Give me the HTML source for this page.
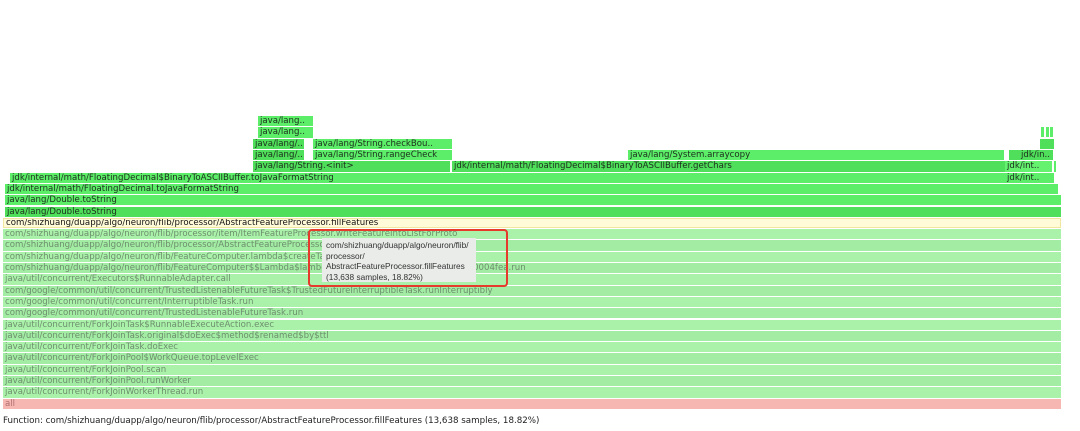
<!DOCTYPE html>
<html><head><meta charset="utf-8"><style>
html,body{margin:0;padding:0;background:#fff;width:1080px;height:431px;overflow:hidden;font-family:"Liberation Sans","DejaVu Sans",sans-serif}
.f{position:absolute;height:10.3px;font-family:"DejaVu Sans",sans-serif;font-size:8.6px;line-height:10.8px;white-space:nowrap;overflow:hidden;padding-left:2px;box-sizing:border-box;color:#1d2d1d}
.b{background:#5cee68}
.c{background:#4fdf5a}
.d{background:#64f26f}
.p{background:#aaf2aa;color:#6e8e6e}
.q{background:#a2eca3;color:#6e8e6e}
</style></head><body>
<div class="f b" style="left:258px;top:116px;width:55px">java/lang..</div>
<div class="f b" style="left:258px;top:127.3px;width:55px">java/lang..</div>
<div class="f c" style="left:253px;top:138.6px;width:51px">java/lang/..</div>
<div class="f b" style="left:313px;top:138.6px;width:139px">java/lang/String.checkBou..</div>
<div class="f c" style="left:253px;top:150px;width:51px">java/lang/..</div>
<div class="f b" style="left:313px;top:150px;width:139px">java/lang/String.rangeCheck</div>
<div class="f b" style="left:628px;top:150px;width:376px">java/lang/System.arraycopy</div>
<div class="f c" style="left:1009px;top:150px;width:44px;text-align:right;padding-right:3px">jdk/in..</div>
<div class="f b" style="left:1041px;top:127px;width:3px"></div>
<div class="f b" style="left:1046px;top:127px;width:3px"></div>
<div class="f b" style="left:1050px;top:127px;width:3px"></div>
<div class="f c" style="left:1040px;top:138.6px;width:14px"></div>
<div class="f c" style="left:253px;top:161.3px;width:197px">java/lang/String.&lt;init&gt;</div>
<div class="f c" style="left:452px;top:161.3px;width:553px">jdk/internal/math/FloatingDecimal$BinaryToASCIIBuffer.getChars</div>
<div class="f d" style="left:1005px;top:161.3px;width:47px">jdk/int..</div>
<div class="f b" style="left:1054px;top:161.3px;width:2px"></div>
<div class="f b" style="left:10px;top:172.6px;width:995px">jdk/internal/math/FloatingDecimal$BinaryToASCIIBuffer.toJavaFormatString</div>
<div class="f b" style="left:1005px;top:172.6px;width:49px">jdk/int..</div>
<div class="f b" style="left:5px;top:184px;width:1053px">jdk/internal/math/FloatingDecimal.toJavaFormatString</div>
<div class="f b" style="left:5px;top:195.2px;width:1056px">java/lang/Double.toString</div>
<div class="f c" style="left:5px;top:206.5px;width:1056px">java/lang/Double.toString</div>
<div class="f" style="left:3px;top:217.8px;width:1058px;background:#fffbd9;border:1px solid #f0e6a0;line-height:9px;color:#111">com/shizhuang/duapp/algo/neuron/flib/processor/AbstractFeatureProcessor.fillFeatures</div>
<div class="f p" style="left:3px;top:229.1px;width:1058px">com/shizhuang/duapp/algo/neuron/flib/processor/item/ItemFeatureProcessor.writeFeatureIntoListForProto</div>
<div class="f q" style="left:3px;top:240.4px;width:1058px">com/shizhuang/duapp/algo/neuron/flib/processor/AbstractFeatureProcessor.fillFeatures</div>
<div class="f p" style="left:3px;top:251.7px;width:1058px">com/shizhuang/duapp/algo/neuron/flib/FeatureComputer.lambda$createTask</div>
<div class="f q" style="left:3px;top:263px;width:1058px">com/shizhuang/duapp/algo/neuron/flib/FeatureComputer$$Lambda$lambda$createTask$1074.0x0000000000004fea.run</div>
<div class="f p" style="left:3px;top:274.3px;width:1058px">java/util/concurrent/Executors$RunnableAdapter.call</div>
<div class="f q" style="left:3px;top:285.6px;width:1058px">com/google/common/util/concurrent/TrustedListenableFutureTask$TrustedFutureInterruptibleTask.runInterruptibly</div>
<div class="f p" style="left:3px;top:296.9px;width:1058px">com/google/common/util/concurrent/InterruptibleTask.run</div>
<div class="f q" style="left:3px;top:308.2px;width:1058px">com/google/common/util/concurrent/TrustedListenableFutureTask.run</div>
<div class="f p" style="left:3px;top:319.5px;width:1058px">java/util/concurrent/ForkJoinTask$RunnableExecuteAction.exec</div>
<div class="f q" style="left:3px;top:330.8px;width:1058px">java/util/concurrent/ForkJoinTask.original$doExec$method$renamed$by$ttl</div>
<div class="f p" style="left:3px;top:342.1px;width:1058px">java/util/concurrent/ForkJoinTask.doExec</div>
<div class="f q" style="left:3px;top:353.4px;width:1058px">java/util/concurrent/ForkJoinPool$WorkQueue.topLevelExec</div>
<div class="f p" style="left:3px;top:364.7px;width:1058px">java/util/concurrent/ForkJoinPool.scan</div>
<div class="f q" style="left:3px;top:376px;width:1058px">java/util/concurrent/ForkJoinPool.runWorker</div>
<div class="f p" style="left:3px;top:387.3px;width:1058px">java/util/concurrent/ForkJoinWorkerThread.run</div>
<div class="f" style="left:3px;top:398.6px;width:1058px;background:#f6b6b2;color:#b07070">all</div>
<div style="position:absolute;left:322px;top:238px;width:154px;height:44px;background:#e9ece9;font-size:8.3px;line-height:10.5px;color:#333;padding:2px 4px;box-sizing:border-box">com/shizhuang/duapp/algo/neuron/flib/<br>processor/<br>AbstractFeatureProcessor.fillFeatures<br>(13,638 samples, 18.82%)</div>
<div style="position:absolute;left:308px;top:229px;width:200px;height:58px;border:2px solid #e53a2c;border-radius:4px;box-sizing:border-box"></div>
<div style="position:absolute;left:3px;top:416px;font-family:'DejaVu Sans',sans-serif;font-size:8.7px;color:#222;white-space:nowrap">Function: com/shizhuang/duapp/algo/neuron/flib/processor/AbstractFeatureProcessor.fillFeatures (13,638 samples, 18.82%)</div>
</body></html>
